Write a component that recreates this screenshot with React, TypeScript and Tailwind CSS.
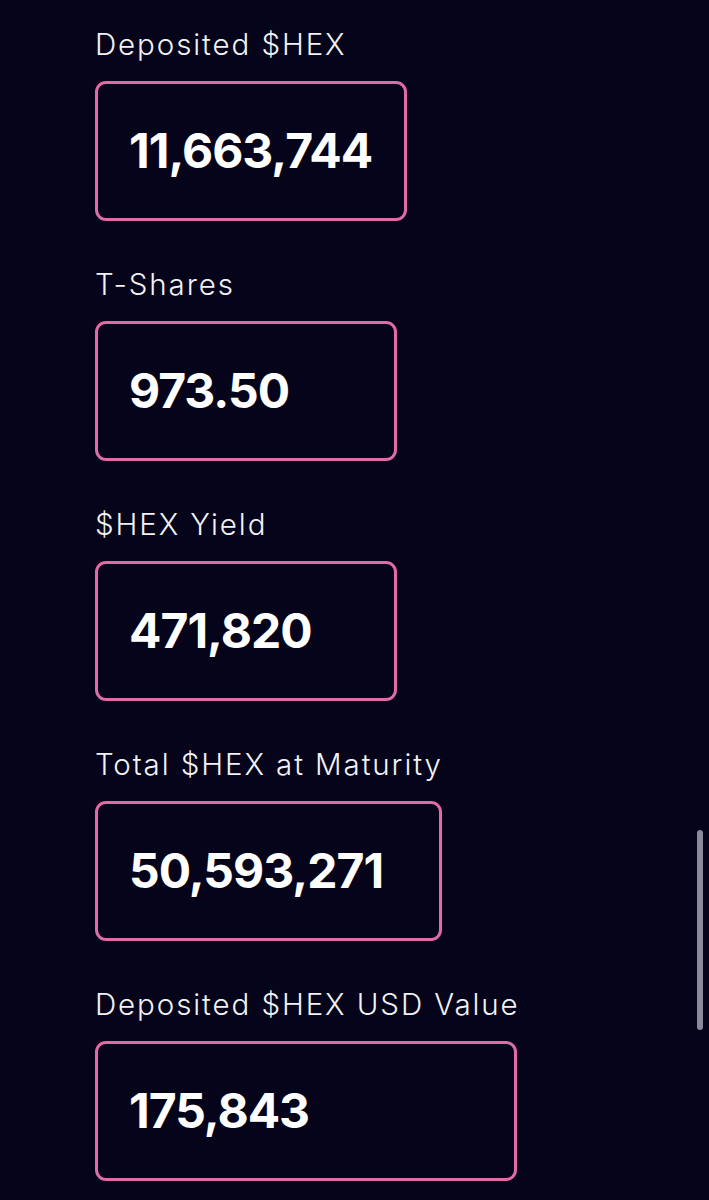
const stats = [
  { label: 'Deposited $HEX', value: '11,663,744', width: 'w-[312px]' },
  { label: 'T-Shares', value: '973.50', width: 'w-[302px]' },
  { label: '$HEX Yield', value: '471,820', width: 'w-[302px]' },
  { label: 'Total $HEX at Maturity', value: '50,593,271', width: 'w-[347px]' },
  { label: 'Deposited $HEX USD Value', value: '175,843', width: 'w-[422px]' },
];

export default function App() {
  return (
    <div className="relative h-[1200px] w-[709px] overflow-hidden bg-[#05041a] font-['Inter',sans-serif] text-white">
      <div className="flex flex-col pl-[95px] pt-[26px]">
        {stats.map((s) => (
          <div key={s.label} className="mb-[45px] flex flex-col">
            <div className="mb-[19px] text-[29.5px] font-light leading-[36px] tracking-[1.9px] text-[#f2f2f5]">
              {s.label}
            </div>
            <div
              className={`flex h-[140px] items-center rounded-[11px] border-[3px] border-[#e26aa6] pl-[31px] ${s.width}`}
            >
              <span className="text-[48px] font-bold leading-none tracking-[-1px]">{s.value}</span>
            </div>
          </div>
        ))}
      </div>

      {/* scrollbar */}
      <div className="absolute left-[697px] top-[830px] h-[200px] w-[6px] rounded-full bg-[#8a8a9c]" />
    </div>
  );
}
